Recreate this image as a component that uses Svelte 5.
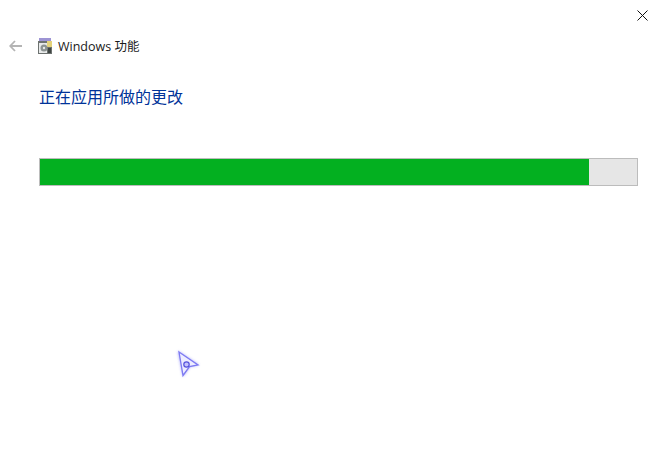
<script>
	const title = 'Windows 功能';
	const heading = '正在应用所做的更改';
	const progress = 92;
</script>

<main class="dialog">
	<div class="close-row">
		<button class="close" type="button" aria-label="关闭">
			<svg width="11" height="11" viewBox="0 0 11 11"><path d="M.5.5l10 10M10.5.5l-10 10" stroke="#111" stroke-width="1" fill="none" /></svg>
		</button>
	</div>

	<header class="titlebar">
		<button class="back" type="button" aria-label="返回">
			<svg width="13" height="12" viewBox="0 0 13 12"><path d="M6 1L1.2 6 6 11M1.5 6H13" stroke="#b4b4b4" stroke-width="1.8" fill="none" /></svg>
		</button>
		<svg class="app-icon" width="16" height="16" viewBox="0 0 16 16">
			<rect x="2" y="0" width="12" height="3" fill="#9d94d4" />
			<rect x="1" y="3" width="14" height="13" fill="#6d7270" />
			<rect x="10" y="3" width="5" height="6" fill="#e4d27a" />
			<rect x="2" y="5" width="8" height="10" fill="#e8eaea" />
			<circle cx="7" cy="10" r="3.5" fill="#8b9291" />
			<circle cx="7" cy="10" r="1.2" fill="#e8eaea" />
			<rect x="11" y="10" width="3" height="5" fill="#3f4543" />
		</svg>
		<span class="app-name">{title}</span>
	</header>

	<section class="content">
		<h1>{heading}</h1>
		<div class="bar" role="progressbar" aria-valuenow={progress}>
			<div class="fill" style="width: {progress}%"></div>
		</div>
	</section>

	<svg class="cursor" width="28" height="32" viewBox="0 0 28 32">
		<defs>
			<filter id="glow" x="-50%" y="-50%" width="200%" height="200%"><feGaussianBlur stdDeviation="1.8" /></filter>
			<filter id="soft" x="-20%" y="-20%" width="140%" height="140%"><feGaussianBlur stdDeviation="0.7" /></filter>
		</defs>
		<path d="M4 3l21 14-9 1.5-7 10z" fill="#9a98f8" opacity="0.9" filter="url(#glow)" />
		<g filter="url(#soft)">
			<path d="M5 4l19 13-8.500 1.500-6.500 9z" fill="#eeedff" stroke="#7d7af2" stroke-width="1.300" />
			<circle cx="12.500" cy="16.500" r="2.700" fill="#c4c2fb" stroke="#5552dc" stroke-width="1.200" />
		</g>
	</svg>
</main>

<style>
	:global(body) {
		margin: 0;
		background: #fff;
	}

	.dialog {
		position: relative;
		height: 451px;
		overflow: hidden;
		background: #fff;
		font-family: 'Open Sans', 'Noto Sans CJK SC', sans-serif;
	}

	button {
		display: flex;
		border: 0;
		background: none;
		padding: 0;
	}

	.close-row {
		display: flex;
		justify-content: flex-end;
		height: 24px;
		padding: 10px 9px 0 0;
		box-sizing: border-box;
	}

	.close {
		height: 11px;
	}

	.titlebar {
		display: flex;
		align-items: center;
		height: 24px;
		margin-top: 10px;
		padding-left: 9px;
	}

	.back {
		margin-right: 15px;
	}

	.app-icon {
		margin-right: 5px;
	}

	.app-name {
		margin-bottom: 2px;
		color: #1a1a1a;
		font-size: 12.5px;
	}

	.content {
		padding: 0 19px 0 39px;
	}

	h1 {
		margin: 0;
		padding-top: 28px;
		height: 72px;
		color: #003399;
		font-size: 16px;
		font-weight: 400;
		line-height: 22px;
	}

	.bar {
		height: 26px;
		border: 1px solid #bcbcbc;
		background: #e6e6e6;
	}

	.fill {
		height: 100%;
		background: #03b020;
	}

	.cursor {
		position: absolute;
		left: 174px;
		top: 348px;
	}
</style>
